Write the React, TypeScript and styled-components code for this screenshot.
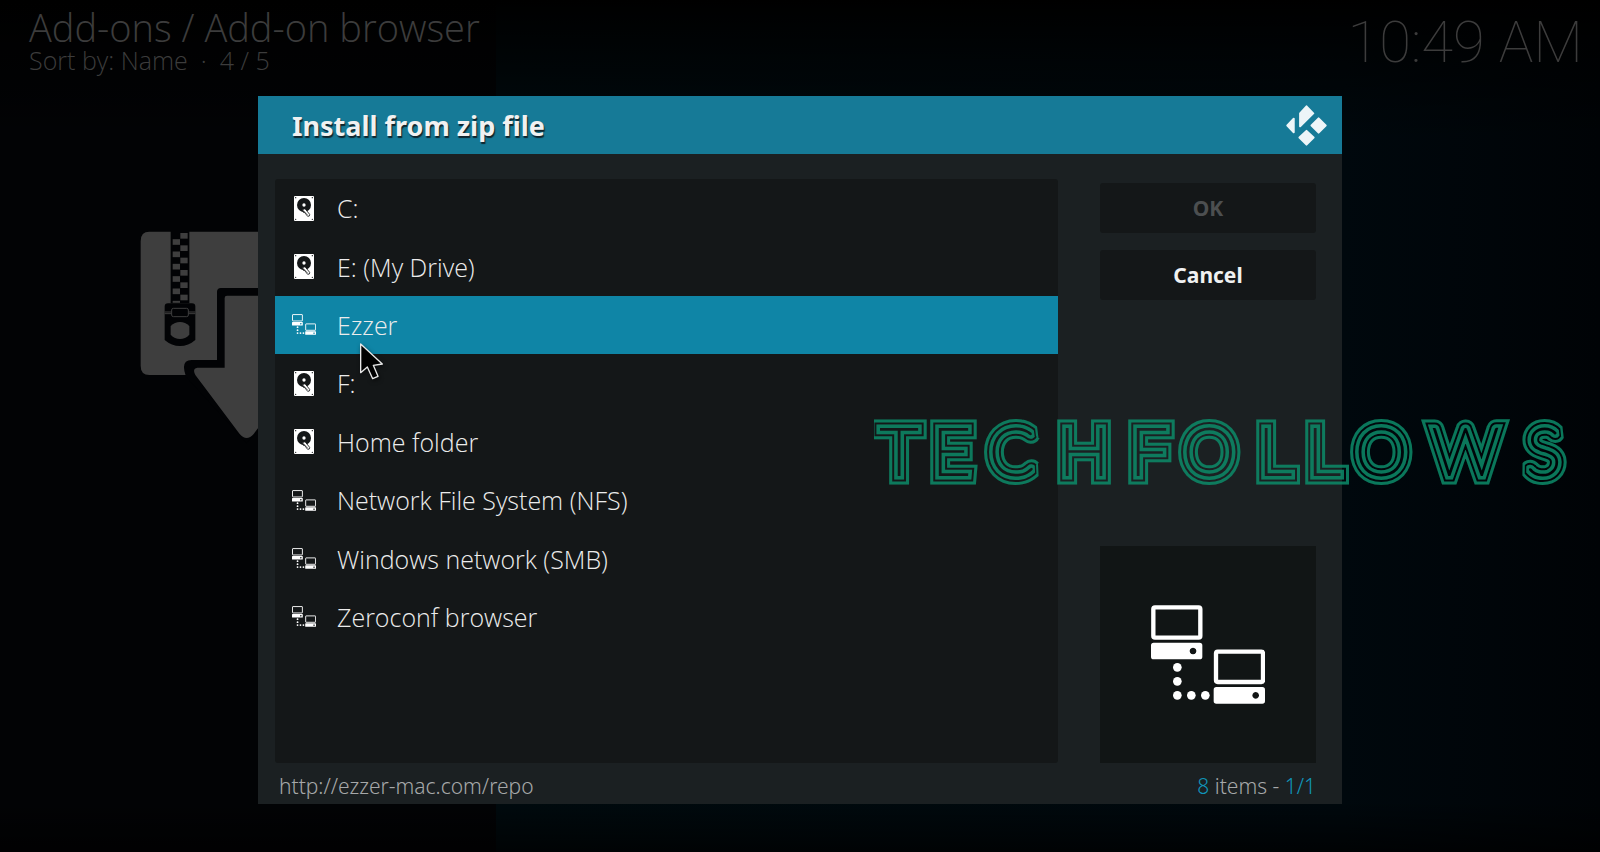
import React from "react";
import styled, { createGlobalStyle, css } from "styled-components";

const GlobalStyle = createGlobalStyle`
  *, *::before, *::after { box-sizing: border-box; }
  body {
    margin: 0;
    background: #000204;
    font-family: "Open Sans", "Noto Sans", sans-serif;
    color: #ececec;
  }
  button { font: inherit; color: inherit; border: 0; }
`;

const Screen = styled.div`
  position: relative;
  min-height: 100vh;
  overflow: hidden;
  background:
    linear-gradient(#000 0, rgba(0, 0, 0, 0) 140px, rgba(0, 0, 0, 0) 94%, rgba(0, 0, 0, 0.7) 100%),
    linear-gradient(90deg, #020305 0, #020305 31%, #000a0e 31%, #00080d 84%, #000306 100%);
`;

const TopBar = styled.header`
  display: flex;
  justify-content: space-between;
  align-items: flex-start;
  padding: 7px 17px 0 29px;
  color: #3c3c3c;
`;

const Heading = styled.h1`
  margin: 0;
  font-size: 38px;
  line-height: 40px;
  font-weight: 300;
`;

const SortInfo = styled.p`
  margin: 0;
  font-size: 25px;
  line-height: 26px;
  font-weight: 300;
  white-space: pre;
`;

const Clock = styled.time`
  font-family: Roboto, sans-serif;
  font-size: 58px;
  line-height: 70px;
  font-weight: 100;
`;

const Backdrop = styled.main`
  padding: 153px 0 0 140px;
`;

const Overlay = styled.div`
  position: absolute;
  inset: 0;
  display: flex;
  justify-content: center;
  align-items: flex-start;
  padding: 96px 24px 48px;
`;

const Dialog = styled.section`
  width: 100%;
  max-width: 1084px;
  background: #1b2022;
`;

const DialogHeader = styled.header`
  display: flex;
  align-items: center;
  justify-content: space-between;
  height: 58px;
  padding: 0 15px 0 34px;
  background: #167a97;
`;

const DialogTitle = styled.h2`
  margin: 0;
  padding-top: 2px;
  font-family: "Noto Sans", sans-serif;
  font-size: 27px;
  line-height: 36px;
  font-weight: 700;
  color: #f0f1f1;
  text-shadow: 1px 2px 1px #10242c;
`;

const DialogBody = styled.div`
  display: flex;
  gap: 42px;
  padding: 25px 26px 0 17px;
`;

const SourceList = styled.ul`
  flex: 1;
  display: grid;
  grid-template-rows: repeat(10, 1fr);
  min-height: 584px;
  margin: 0;
  padding: 0;
  list-style: none;
  background: #141718;
  border-radius: 3px;
`;

const SourceItem = styled.li`
  position: relative;
  display: flex;
`;

const SourceButton = styled.button<{ $active: boolean }>`
  flex: 1;
  display: flex;
  align-items: center;
  gap: 21px;
  padding: 0 17px;
  text-align: left;
  font-size: 25px;
  line-height: 34px;
  font-weight: 300;
  background: transparent;
  ${(p) => p.$active && css`background: #0f85a6;`}
`;

const IconSlot = styled.span`
  display: flex;
  justify-content: center;
  width: 24px;
  color: #fff;
`;

const Pointer = styled.svg`
  position: absolute;
  left: 84px;
  top: 46px;
  z-index: 1;
  filter: drop-shadow(1px 2px 2px rgba(0, 0, 0, 0.5));
`;

const Sidebar = styled.aside`
  width: 216px;
  display: flex;
  flex-direction: column;
  gap: 17px;
  padding-top: 4px;
`;

const ActionButton = styled.button`
  height: 50px;
  font-family: "Noto Sans", sans-serif;
  font-size: 21px;
  font-weight: 700;
  color: #f0f1f1;
  background: #141718;
  border-radius: 3px;
  &:disabled { color: #4c4f50; }
`;

const Preview = styled.div`
  display: flex;
  align-items: center;
  justify-content: center;
  height: 217px;
  margin-top: auto;
  color: #fff;
  background: #111515;
`;

const DialogFooter = styled.footer`
  display: flex;
  justify-content: space-between;
  padding: 8px 26px 3px 21px;
  font-family: "Noto Sans", sans-serif;
  font-size: 21px;
  line-height: 30px;
  font-weight: 300;
  color: #a6a8a9;
`;

const Accent = styled.span`
  color: #1095ba;
`;

const Watermark = styled.svg`
  position: absolute;
  right: 26px;
  top: 404px;
  z-index: 2;
  pointer-events: none;
`;

const NetworkIcon = ({ width, height }: { width: number; height: number }) => (
  <svg width={width} height={height} viewBox="0 0 342 297" fill="currentColor" aria-hidden="true">
    {[[0, 0], [188, 133]].map(([x, y]) => (
      <g key={x} transform={`translate(${x} ${y})`}>
        <rect x="7" y="7" width="141" height="91" rx="5" fill="none" stroke="currentColor" strokeWidth="13" />
        <path
          fillRule="evenodd"
          d="M8 113H146Q154 113 154 121V155Q154 163 146 163H8Q0 163 0 155V121Q0 113 8 113ZM126 128a10 10 0 1 0 .1 0Z"
        />
      </g>
    ))}
    {[[79, 187], [79, 229], [79, 271], [121, 271], [163, 271]].map(([x, y]) => (
      <circle key={`${x}-${y}`} cx={x} cy={y} r="13" />
    ))}
  </svg>
);

const DriveIcon = () => (
  <svg width="20" height="25" viewBox="0 0 60 75" aria-hidden="true">
    <rect width="60" height="75" rx="3" fill="#fff" />
    <g fill="#141718">
      <circle cx="30" cy="27" r="21" />
      <path d="M22 42 L29 40 L34 48 L29 51 Z" />
      <circle cx="5" cy="5" r="2" />
      <circle cx="55" cy="5" r="2" />
      <circle cx="5" cy="70" r="2" />
      <circle cx="55" cy="70" r="2" />
    </g>
    <circle cx="30" cy="27" r="5" fill="#fff" />
    <path d="M25 41 L33 38 L47 55 Q48 62 41 61 Z" fill="#fff" stroke="#141718" strokeWidth="2.5" />
    <path d="M31 46 L41 57" stroke="#141718" strokeWidth="1.5" />
  </svg>
);

const KodiLogo = () => (
  <svg width="41" height="41" viewBox="0 0 122 122" fill="#edf5f8" stroke="#edf5f8" strokeWidth="6" strokeLinejoin="round" aria-hidden="true">
    <path d="M23 41V81L4 61Z" />
    <path d="M42 25 61 4 81 25 42 63Z" />
    <path d="M97 40 118 61 97 82 76 61Z" />
    <path d="M61 77 82 97 61 118 40 97Z" />
  </svg>
);

const teeth = Array.from({ length: 12 }, (_, i) => i);

const ZipArt = () => (
  <svg width="214" height="214" viewBox="60 60 642 642" aria-hidden="true">
    <path
      fill="#3e3e3e"
      d="M88 65H672Q700 65 700 93V467Q700 495 672 495H88Q62 495 62 467V93Q62 65 88 65Z"
    />
    <path fill="#020305" d="M152 60H208V280H152Z" />
    {teeth.map((i) => (
      <rect
        key={i}
        x={i % 2 === 0 ? 181 : 158}
        y={69 + i * 18.5}
        width="22"
        height={i === 11 ? 6 : 17}
        fill="#3e3e3e"
      />
    ))}
    <path
      fill="#020305"
      d="M144 280H216Q226 280 226 290V390Q205 408 180 408Q155 408 134 390V290Q134 280 144 280Z"
    />
    <path fill="none" stroke="#3e3e3e" strokeWidth="3" d="M134 306H156M204 306H226M134 311H156M204 311H226" />
    <rect x="155" y="295" width="50" height="25" rx="5" fill="#020305" stroke="#3e3e3e" strokeWidth="3" />
    <path fill="#3e3e3e" d="M152 348Q164 336 180 336Q196 336 208 348V374Q196 387 180 387Q164 387 152 374Z" />
    <path
      fill="#020305"
      d="M198 500Q180 450 215 450H291V246Q291 234 303 234H460Q472 234 472 246V450H550Q580 450 562 500L380 700Z"
    />
    <path
      fill="#3e3e3e"
      d="M232 473H314V264Q314 257 321 257H439Q446 257 446 264V473H528Q542 478 536 491L401 672Q380 696 359 672L226 495Q216 476 232 473Z"
    />
  </svg>
);

/* Concentric strokes around thin lettering leave four parallel neon lines. */
const stripes: Array<[string, number]> = [
  ["#fff", 19],
  ["#000", 13],
  ["#fff", 9],
  ["#000", 2],
];

const Logo = () => (
  <Watermark width="700" height="96" viewBox="0 0 700 96" role="img" aria-label="TECHFOLLOWS">
    <mask id="neon" maskUnits="userSpaceOnUse" x="0" y="0" width="700" height="96">
      {stripes.map(([colour, width]) => (
        <text
          key={width}
          x="6 58 115 185 256 309 384 433 481 558 652"
          y="71"
          fontFamily="Lato, sans-serif"
          fontWeight="100"
          fontSize="67"
          fill={colour}
          stroke={colour}
          strokeWidth={width}
          strokeLinejoin="miter"
        >
          TE<tspan strokeLinejoin="bevel">C</tspan>HFOLLOW<tspan strokeLinejoin="bevel">S</tspan>
        </text>
      ))}
    </mask>
    <rect width="700" height="96" fill="#0c8a68" opacity="0.86" mask="url(#neon)" />
  </Watermark>
);

type Source = { name: string; kind: "drive" | "network" };

const sources: Source[] = [
  { name: "C:", kind: "drive" },
  { name: "E: (My Drive)", kind: "drive" },
  { name: "Ezzer", kind: "network" },
  { name: "F:", kind: "drive" },
  { name: "Home folder", kind: "drive" },
  { name: "Network File System (NFS)", kind: "network" },
  { name: "Windows network (SMB)", kind: "network" },
  { name: "Zeroconf browser", kind: "network" },
];

export default function App() {
  const selected = "Ezzer";
  return (
    <Screen>
      <GlobalStyle />
      <TopBar>
        <div>
          <Heading>Add-ons / Add-on browser</Heading>
          <SortInfo>{"Sort by: Name  ·  4 / 5"}</SortInfo>
        </div>
        <Clock>10:49 AM</Clock>
      </TopBar>
      <Backdrop>
        <ZipArt />
      </Backdrop>
      <Overlay>
        <Dialog role="dialog" aria-labelledby="dialog-title">
          <DialogHeader>
            <DialogTitle id="dialog-title">Install from zip file</DialogTitle>
            <KodiLogo />
          </DialogHeader>
          <DialogBody>
            <SourceList>
              {sources.map(({ name, kind }) => (
                <SourceItem key={name}>
                  <SourceButton type="button" $active={name === selected}>
                    <IconSlot>
                      {kind === "drive" ? <DriveIcon /> : <NetworkIcon width={24} height={21} />}
                    </IconSlot>
                    {name}
                  </SourceButton>
                  {name === selected && (
                    <Pointer width="26" height="40" viewBox="0 0 78 120" aria-hidden="true">
                      <path
                        d="M5 6V92L25 75L41 110L57 103L43 70L70 66Z"
                        fill="#000"
                        stroke="#e8e8e8"
                        strokeWidth="4"
                        strokeLinejoin="round"
                      />
                    </Pointer>
                  )}
                </SourceItem>
              ))}
            </SourceList>
            <Sidebar>
              <ActionButton type="button" disabled>OK</ActionButton>
              <ActionButton type="button">Cancel</ActionButton>
              <Preview>
                <NetworkIcon width={114} height={99} />
              </Preview>
            </Sidebar>
          </DialogBody>
          <DialogFooter>
            <span>http://ezzer-mac.com/repo</span>
            <span>
              <Accent>8</Accent> items - <Accent>1/1</Accent>
            </span>
          </DialogFooter>
        </Dialog>
      </Overlay>
      <Logo />
    </Screen>
  );
}
